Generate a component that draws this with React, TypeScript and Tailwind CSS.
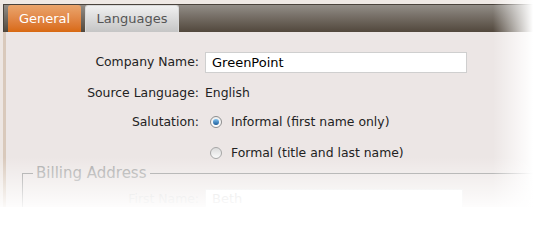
export default function App() {
  return (
    <div className="relative w-[533px] h-[207px] overflow-hidden bg-[#ede6e2] font-['DejaVu_Sans',sans-serif] text-[12.4px] text-[#222]">
      {/* thin strip above the tab bar */}
      <div className="h-[4px] bg-[#efe9e5]" />

      <div className="ml-[3px] flex h-[203px] flex-col">
        {/* Tab bar */}
        <div className="flex h-[32px] items-end gap-[4px] border-t border-l border-[#4a433c] bg-gradient-to-b from-[#928d87] to-[#52483d] pl-[4px]">
          <div className="flex h-[27px] w-[73px] items-center justify-center rounded-t-[3px] bg-gradient-to-b from-[#eaa56c] to-[#d8690f] text-[13px] text-white">
            General
          </div>
          <div className="flex h-[27px] w-[94px] items-center justify-center rounded-t-[3px] border border-b-0 border-[#d8d8d8] bg-gradient-to-b from-[#f0f0f0] to-[#c5c5c5] text-[13px] text-[#555]">
            Languages
          </div>
        </div>

        {/* Form body */}
        <div className="flex-1 border-l-[3px] border-[#d9c9bb] bg-[#ece6e5] pt-[20px]">
          <div className="grid grid-cols-[193px_1fr] items-center gap-x-[6px]">
            <div className="text-right">Company Name:</div>
            <div className="flex h-[21px] w-[262px] items-center border border-[#cfcfcf] bg-white px-[6px] text-[13px] text-black">
              GreenPoint
            </div>

            <div className="mt-[10px] h-[20px] text-right leading-[20px]">Source Language:</div>
            <div className="mt-[10px] h-[20px] leading-[20px]">English</div>

            <div className="mt-[9px] h-[20px] text-right leading-[20px]">Salutation:</div>
            <div className="mt-[9px] flex h-[20px] items-center gap-[9px] pl-[5px]">
              <span className="flex h-[12px] w-[12px] items-center justify-center rounded-full border border-[#8d8d8d] bg-gradient-to-b from-[#eee] to-[#fff]">
                <span className="h-[6px] w-[6px] rounded-full bg-gradient-to-b from-[#7fc2f0] to-[#1a5d9a]" />
              </span>
              <span>Informal (first name only)</span>
            </div>

            <div className="mt-[11px]" />
            <div className="mt-[11px] flex h-[20px] items-center gap-[9px] pl-[5px]">
              <span className="h-[12px] w-[12px] rounded-full border border-[#a6a6a6] bg-gradient-to-b from-[#dcdcdc] to-[#fafafa]" />
              <span>Formal (title and last name)</span>
            </div>
          </div>

          {/* Billing Address fieldset */}
          <fieldset className="-mt-[1px] ml-[16px] border-t border-l border-[#9c9c9c] pl-[10px]">
            <legend className="px-[3px] text-[15px] text-[#a8a8a8]">Billing Address</legend>
            <div className="grid grid-cols-[166px_1fr] items-center gap-x-[6px] pt-[4px]">
              <div className="text-right text-[#d0d0d0]">First Name:</div>
              <div className="flex h-[21px] w-[258px] items-center border border-[#ebebeb] bg-white px-[6px] text-[13px] text-[#d2d2d2]">
                Beth
              </div>
            </div>
          </fieldset>
        </div>
      </div>

      {/* Fade-out overlays on the right and bottom edges */}
      <div className="pointer-events-none absolute inset-y-0 right-0 w-[40px] bg-gradient-to-r from-white/0 to-white" />
      <div className="pointer-events-none absolute inset-x-0 bottom-0 h-[50px] bg-gradient-to-b from-white/0 to-white/90" />
    </div>
  );
}
